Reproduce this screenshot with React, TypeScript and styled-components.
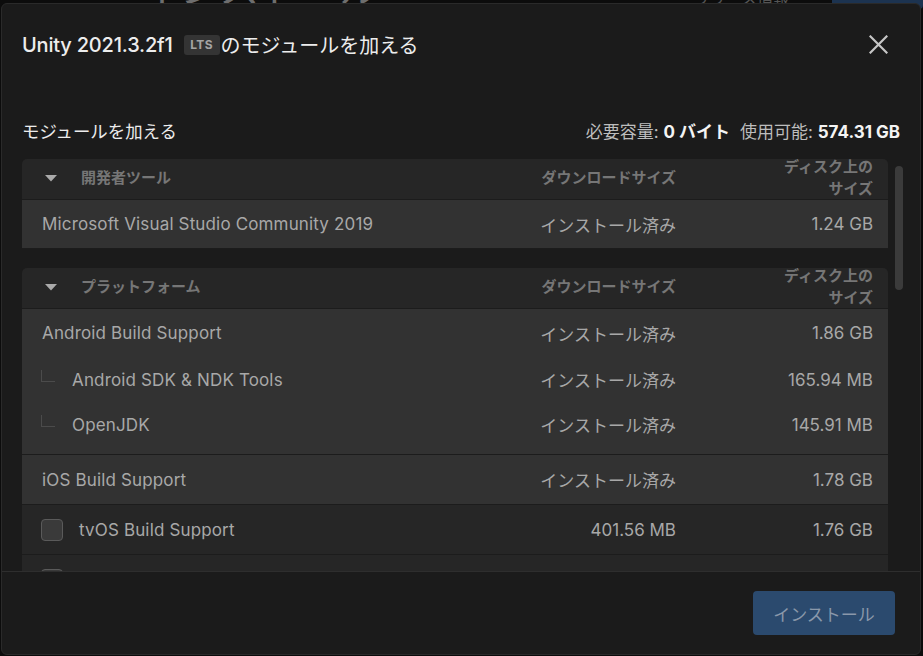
import React from "react";
import styled, { createGlobalStyle } from "styled-components";

const Global = createGlobalStyle`
  html, body { margin: 0; padding: 0; background: #0c0c0c; }
  body {
    font-family: Inter, "Noto Sans CJK JP", sans-serif;
    overflow: hidden;
    width: 923px;
    height: 656px;
  }
  * { box-sizing: border-box; }
`;

const Page = styled.div`
  position: relative;
  width: 923px;
  height: 656px;
  overflow: hidden;
  background: #0c0c0c;
`;

const BackdropBar = styled.div`
  display: flex;
  align-items: flex-end;
  height: 40px;
  margin-top: -31px;
  padding-left: 140px;
`;

const BackdropTitle = styled.div`
  font-size: 40px;
  line-height: 40px;
  color: #6e6e6e;
  width: 554px;
`;

const BackdropLink = styled.div`
  font-size: 16px;
  color: #555555;
  width: 130px;
`;

const BackdropButton = styled.div`
  margin-left: auto;
  width: 91px;
  height: 40px;
  background: #1c3350;
  border-radius: 4px;
`;

const Overlay = styled.div`
  position: absolute;
  inset: 0;
  display: flex;
  padding: 3px 2px 1px 1px;
`;

const Dialog = styled.div`
  flex: 1;
  display: flex;
  flex-direction: column;
  background: #1b1b1b;
  border: 1px solid #2a2a2a;
  border-radius: 6px;
  overflow: hidden;
`;

const Header = styled.div`
  height: 83px;
  flex: none;
  display: flex;
  align-items: center;
  justify-content: space-between;
  padding: 0 31px 2px 20px;
`;

const Title = styled.h1`
  margin: 0;
  display: flex;
  align-items: center;
  font-size: 20px;
  font-weight: 400;
  color: #ededed;
`;

const Version = styled.span`
  font-weight: 500;
  letter-spacing: -0.2px;
`;

const Badge = styled.span`
  display: inline-flex;
  align-items: center;
  justify-content: center;
  width: 36px;
  height: 20px;
  margin: 0 1px 0 11px;
  background: #343434;
  color: #a4a4a4;
  font-size: 12px;
  font-weight: 700;
  border-radius: 3px;
  letter-spacing: 0.4px;
`;

const CloseButton = styled.button`
  width: 22px;
  height: 22px;
  padding: 0;
  border: none;
  background: transparent;
  display: flex;
  align-items: center;
  justify-content: center;
  cursor: pointer;
`;

const SubHeader = styled.div`
  flex: none;
  height: 40px;
  margin: 23px 20px 0 20px;
  display: flex;
  align-items: center;
  justify-content: space-between;
`;

const SubTitle = styled.div`
  font-size: 17.4px;
  color: #ececec;
`;

const Stats = styled.div`
  font-size: 17px;
  color: #bdbdbd;
  display: flex;
  gap: 10px;
`;

const StatValue = styled.b`
  color: #f4f4f4;
  font-weight: 700;
`;

const Main = styled.div`
  flex: 1;
  min-height: 0;
  display: flex;
  gap: 7px;
  margin-top: 9px;
  padding: 0 17px 0 20px;
`;

const ScrollArea = styled.div`
  flex: 1;
  overflow: hidden;
  display: flex;
  flex-direction: column;
  gap: 19px;
`;

const ScrollTrack = styled.div`
  width: 8px;
  flex: none;
  padding-top: 7px;
`;

const Thumb = styled.div`
  width: 8px;
  height: 124px;
  border-radius: 4px;
  background: #3b3b3b;
`;

const Section = styled.div`
  flex: none;
  border-radius: 5px 5px 0 0;
  overflow: hidden;
`;

const Grid = styled.div`
  display: grid;
  grid-template-columns: 1fr 200px 100px;
  grid-template-rows: 1fr;
  column-gap: 97px;
  align-items: center;
  padding: 0 15px 0 20px;
`;

const HeaderRow = styled(Grid)`
  height: 41px;
  background: #262626;
  border-bottom: 1px solid #1c1c1c;
  font-size: 15px;
  font-weight: 700;
  color: #767676;
`;

const HeaderLabel = styled.div`
  display: flex;
  align-items: center;
  line-height: 22px;
  margin: -5px 0 -3px;
`;

const Caret = styled.svg`
  margin: 0 24px 0 3px;
  flex: none;
`;

const HeaderCell = styled.div`
  text-align: right;
  line-height: 22px;
  margin: -5px 0 -3px;
`;

const Row = styled(Grid)<{ $installed?: boolean; $h?: number }>`
  height: ${(p) => p.$h ?? 50}px;
  background: ${(p) => (p.$installed ? "#323232" : "#262626")};
  border-bottom: 1px solid #1c1c1c;
  font-size: 17px;
  color: #a8a8a8;
`;

const Group = styled.div`
  background: #323232;
  border-bottom: 1px solid #1c1c1c;
  padding-bottom: 7px;
`;

const PlainRow = styled(Grid)<{ $h: number }>`
  height: ${(p) => p.$h}px;
  font-size: 17px;
  color: #a8a8a8;
`;

const NameCell = styled.div`
  display: flex;
  align-items: center;
  white-space: nowrap;
  letter-spacing: 0.15px;
`;

const SubName = styled(NameCell)`
  margin-left: -1px;
`;

const Corner = styled.span`
  width: 14px;
  height: 12px;
  margin: -8px 17px 0 0;
  border-left: 1px solid #4b4b4b;
  border-bottom: 1px solid #4b4b4b;
  flex: none;
`;

const Checkbox = styled.span`
  width: 22px;
  height: 22px;
  margin: 0 16px 0 -1px;
  border: 1px solid #5a5a5a;
  border-radius: 4px;
  background: #3a3a3a;
  flex: none;
`;

const ValueCell = styled.div`
  text-align: right;
  white-space: nowrap;
`;

const Footer = styled.div`
  flex: none;
  height: 83px;
  border-top: 1px solid #2e2e2e;
  display: flex;
  align-items: center;
  justify-content: flex-end;
  padding-right: 25px;
`;

const InstallButton = styled.button`
  width: 142px;
  height: 44px;
  border: none;
  border-radius: 4px;
  background: #2b4a6e;
  color: #8a98aa;
  font-family: inherit;
  font-size: 17px;
`;

const CaretIcon = () => (
  <Caret width="12" height="7" viewBox="0 0 12 7">
    <polygon points="0,0 12,0 6,6.5" fill="#aaaaaa" />
  </Caret>
);

const SectionHeader = ({ label }: { label: string }) => (
  <HeaderRow>
    <HeaderLabel>
      <CaretIcon />
      {label}
    </HeaderLabel>
    <HeaderCell>ダウンロードサイズ</HeaderCell>
    <HeaderCell>ディスク上のサイズ</HeaderCell>
  </HeaderRow>
);

const INSTALLED = "インストール済み";

export default function App() {
  return (
    <Page>
      <Global />
      <BackdropBar>
        <BackdropTitle>インストール</BackdropTitle>
        <BackdropLink>リリース情報</BackdropLink>
        <BackdropButton />
      </BackdropBar>
      <Overlay>
        <Dialog>
          <Header>
            <Title>
              <Version>Unity 2021.3.2f1</Version>
              <Badge>LTS</Badge>
              のモジュールを加える
            </Title>
            <CloseButton aria-label="閉じる">
              <svg width="19" height="19" viewBox="0 0 19 19">
                <path d="M1.5 1.5 L17.5 17.5 M17.5 1.5 L1.5 17.5" stroke="#c6c6c6" strokeWidth="2.2" strokeLinecap="square" />
              </svg>
            </CloseButton>
          </Header>

          <SubHeader>
            <SubTitle>モジュールを加える</SubTitle>
            <Stats>
              <span>
                必要容量: <StatValue>0 バイト</StatValue>
              </span>
              <span>
                使用可能: <StatValue>574.31 GB</StatValue>
              </span>
            </Stats>
          </SubHeader>

          <Main>
            <ScrollArea>
              <Section>
                <SectionHeader label="開発者ツール" />
                <Row $installed $h={49}>
                  <NameCell>Microsoft Visual Studio Community 2019</NameCell>
                  <ValueCell>{INSTALLED}</ValueCell>
                  <ValueCell>1.24 GB</ValueCell>
                </Row>
              </Section>

              <Section>
                <SectionHeader label="プラットフォーム" />
                <Group>
                  <PlainRow $h={48}>
                    <NameCell>Android Build Support</NameCell>
                    <ValueCell>{INSTALLED}</ValueCell>
                    <ValueCell>1.86 GB</ValueCell>
                  </PlainRow>
                  <PlainRow $h={45}>
                    <SubName>
                      <Corner />
                      Android SDK &amp; NDK Tools
                    </SubName>
                    <ValueCell>{INSTALLED}</ValueCell>
                    <ValueCell>165.94 MB</ValueCell>
                  </PlainRow>
                  <PlainRow $h={45}>
                    <SubName>
                      <Corner />
                      OpenJDK
                    </SubName>
                    <ValueCell>{INSTALLED}</ValueCell>
                    <ValueCell>145.91 MB</ValueCell>
                  </PlainRow>
                </Group>
                <Row $installed>
                  <NameCell>iOS Build Support</NameCell>
                  <ValueCell>{INSTALLED}</ValueCell>
                  <ValueCell>1.78 GB</ValueCell>
                </Row>
                <Row>
                  <NameCell>
                    <Checkbox />
                    tvOS Build Support
                  </NameCell>
                  <ValueCell>401.56 MB</ValueCell>
                  <ValueCell>1.76 GB</ValueCell>
                </Row>
                <Row>
                  <NameCell>
                    <Checkbox />
                    Linux Build Support (IL2CPP)
                  </NameCell>
                  <ValueCell>101.73 MB</ValueCell>
                  <ValueCell>423.68 MB</ValueCell>
                </Row>
              </Section>
            </ScrollArea>
            <ScrollTrack>
              <Thumb />
            </ScrollTrack>
          </Main>

          <Footer>
            <InstallButton>インストール</InstallButton>
          </Footer>
        </Dialog>
      </Overlay>
    </Page>
  );
}
